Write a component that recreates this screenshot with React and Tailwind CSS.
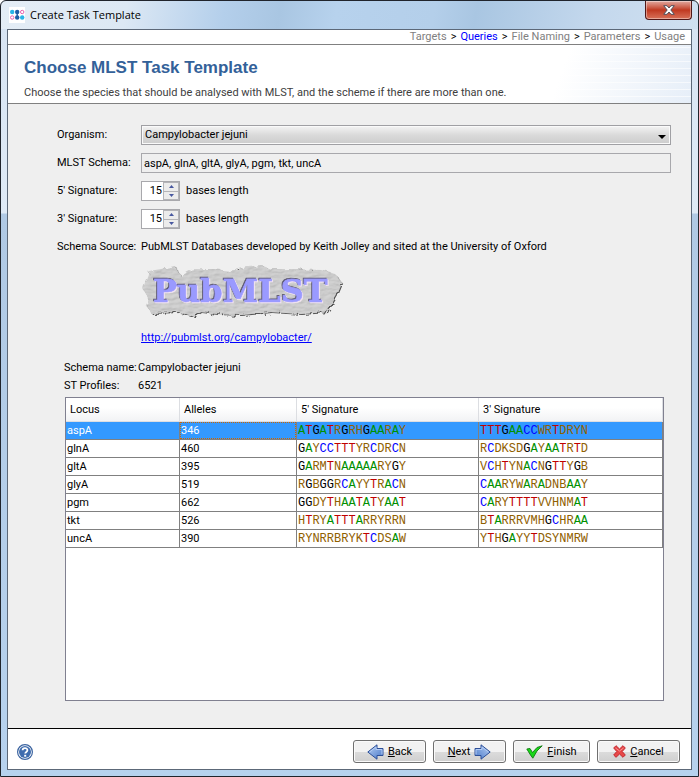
const steps = ['Targets', 'Queries', 'File Naming', 'Parameters', 'Usage'];

const loci = [
  { locus: 'aspA', alleles: 346, five: 'ATGATRGRHGAARAY', three: 'TTTGAACCWRTDRYN' },
  { locus: 'glnA', alleles: 460, five: 'GAYCCTTTYRCDRCN', three: 'RCDKSDGAYAATRTD' },
  { locus: 'gltA', alleles: 395, five: 'GARMTNAAAAARYGY', three: 'VCHTYNACNGTTYGB' },
  { locus: 'glyA', alleles: 519, five: 'RGBGGRCAYYTRACN', three: 'CAARYWARADNBAAY' },
  { locus: 'pgm', alleles: 662, five: 'GGDYTHAATATYAAT', three: 'CARYTTTTVVHNMAT' },
  { locus: 'tkt', alleles: 526, five: 'HTRYATTTARRYRRN', three: 'BTARRRVMHGCHRAA' },
  { locus: 'uncA', alleles: 390, five: 'RYNRRBRYKTCDSAW', three: 'YTHGAYYTDSYNMRW' },
];

const baseColors = {
  A: 'text-[#009000]',
  C: 'text-[#0000ff]',
  G: 'text-black',
  T: 'text-[#c00000]',
};

function Sequence({ value }) {
  return (
    <span className="font-['Liberation_Mono',monospace] text-[12px]">
      {value.split('').map((base, i) => (
        <span key={i} className={baseColors[base] || 'text-[#906000]'}>{base}</span>
      ))}
    </span>
  );
}

function AppIcon() {
  return (
    <svg width="16" height="16" viewBox="0 0 16 16" className="bg-white">
      <circle cx="3.2" cy="5" r="2.2" fill="#28b4e8" />
      <circle cx="8.2" cy="5" r="2.2" fill="#1d5fa8" />
      <circle cx="13.2" cy="5" r="1.7" fill="none" stroke="#e860b0" />
      <circle cx="3.2" cy="10.5" r="1.7" fill="none" stroke="#e860b0" />
      <circle cx="8.2" cy="10.5" r="2.2" fill="#1d5fa8" />
      <circle cx="13.2" cy="10.5" r="2.2" fill="#28b4e8" />
      <path d="M8.2 4V12" stroke="#1d5fa8" strokeWidth="1.4" />
    </svg>
  );
}

function Spinner({ id }) {
  return (
    <div className="flex h-5 w-[39px] border border-[#a8a8ac] bg-white">
      <input
        id={id}
        type="text"
        defaultValue="15"
        className="w-[21px] bg-white pr-px text-right outline-none"
      />
      <div className="flex w-4 flex-col gap-px bg-[#b4b4b8] p-px">
        <button type="button" aria-label="Increase" className="flex flex-1 items-center justify-center bg-[#ececec]">
          <svg width="5" height="3" viewBox="0 0 5 3"><path d="M0 3 2.5 0 5 3z" fill="#4858a0" /></svg>
        </button>
        <button type="button" aria-label="Decrease" className="flex flex-1 items-center justify-center bg-[#ececec]">
          <svg width="5" height="3" viewBox="0 0 5 3"><path d="M0 0 2.5 3 5 0z" fill="#4858a0" /></svg>
        </button>
      </div>
    </div>
  );
}

function PubMlstLogo() {
  return (
    <svg width="204" height="56" viewBox="0 0 204 56" role="img" aria-label="PubMLST">
      <defs>
        <filter id="torn" x="-5%" y="-10%" width="110%" height="120%">
          <feTurbulence type="fractalNoise" baseFrequency="0.16" numOctaves="3" seed="4" result="n" />
          <feDisplacementMap in="SourceGraphic" in2="n" scale="6" result="shape" />
          <feTurbulence type="fractalNoise" baseFrequency="0.12 0.3" numOctaves="3" seed="9" result="grain" />
          <feDiffuseLighting in="grain" surfaceScale="0.8" lightingColor="#d6d6d6" result="lit">
            <feDistantLight azimuth="235" elevation="64" />
          </feDiffuseLighting>
          <feComposite in="lit" in2="shape" operator="in" result="stone" />
          <feDropShadow in="stone" dx="1" dy="1" stdDeviation="0.4" floodColor="#333" floodOpacity="0.8" />
        </filter>
        <filter id="carved" x="-5%" y="-10%" width="110%" height="120%">
          <feDropShadow in="SourceGraphic" dx="-1" dy="-1" stdDeviation="0.2" floodColor="#504c68" floodOpacity="0.9" result="dark" />
          <feDropShadow in="dark" dx="1" dy="1" stdDeviation="0.2" floodColor="#f6e6f6" floodOpacity="0.9" />
        </filter>
      </defs>
      <path
        d="M8 8 20 6 34 3 40 13 52 6 72 6 90 8 106 4 122 3 130 6 150 6 180 7 194 11 201 20 196 32 190 42 186 49 160 51 130 49 100 52 76 51 60 49 52 54 38 49 10 50 5 42 8 36 2 26 5 16z"
        fill="#c8c8c8"
        filter="url(#torn)"
      />
      <text
        x="12"
        y="39"
        fontFamily="'DejaVu Serif', serif"
        fontWeight="bold"
        fontSize="32"
        fill="#9a9aff"
        stroke="#9a9aff"
        strokeWidth="0.6"
        filter="url(#carved)"
      >
        PubMLST
      </text>
    </svg>
  );
}

function Arrow({ className = '' }) {
  return (
    <svg width="17" height="16" viewBox="0 0 17 16" className={className}>
      <defs>
        <linearGradient id="arrow" x1="0" y1="0" x2="1" y2="1">
          <stop offset="0" stopColor="#b8d0f4" />
          <stop offset="1" stopColor="#4878c8" />
        </linearGradient>
      </defs>
      <path d="M0.8 8 10 0.8V4.5H16V11.5H10V15.2z" fill="url(#arrow)" stroke="#2c4f98" />
      <path d="M2.6 8 9 3V5.5H15V10.5" fill="none" stroke="#b4ccf4" />
    </svg>
  );
}

function CheckIcon() {
  return (
    <svg width="17" height="14" viewBox="0 0 17 14">
      <path d="M0.8 4 4 3.5 6.5 7.5 11 2.5 16.2 0.8 11 6 6.8 13.2 4.5 10z" fill="#18d818" stroke="#107810" strokeWidth="0.9" />
    </svg>
  );
}

function CrossIcon() {
  return (
    <svg width="13" height="13" viewBox="0 0 13 13">
      <path
        d="M3 0.7 6.5 4 10 0.7 12.3 3 9.2 6.5 12.3 10 10 12.3 6.5 9 3 12.3 0.7 10 3.8 6.5 0.7 3z"
        fill="#e84848"
        stroke="#c02830"
        strokeLinejoin="round"
      />
      <path d="M2.5 3 6.5 6 10.5 3" fill="none" stroke="#f89090" />
    </svg>
  );
}

function HelpIcon() {
  return (
    <svg width="16" height="16" viewBox="0 0 16 16">
      <circle cx="8" cy="8" r="7.4" fill="#fff" stroke="#3c64a0" strokeWidth="1.2" />
      <circle cx="8" cy="8" r="6" fill="#3f6cae" />
      <path d="M5.6 6.3C5.6 3.4 10.4 3.4 10.4 6.2 10.4 8 8.2 7.8 8.2 9.6" fill="none" stroke="#fff" strokeWidth="1.8" />
      <rect x="7.2" y="10.8" width="2" height="1.9" fill="#fff" />
    </svg>
  );
}

const navButton =
  'flex h-[23px] items-center justify-center gap-1 rounded-[3px] border border-[#707070] bg-linear-to-b from-[#f2f2f2] from-50% via-[#dcdcdc] via-50% to-[#cfcfcf] shadow-[inset_0_0_0_1px_#fafafa]';

const headCell = 'border-r border-b border-[#dcdee2] pl-1 font-normal';
const cell = 'border-r border-b border-[#808080] p-0';

export default function App() {
  return (
    <div className="flex min-h-screen flex-col rounded-t-md border border-[#20242c] bg-[linear-gradient(100deg,#e4edf6_0%,#dce8f4_18%,#b4cfeb_32%,#a9c6e2_40%,#b7d2ed_48%,#b4cfea_62%,#a9c6e2_68%,#c4d8ed_85%,#d0e0f0_100%),linear-gradient(#d6e3f2_0px,#dfeaf6_212px,#b0c9e4_213px,#b7d2ee_100%)] bg-[length:100%_28px,100%_100%] bg-no-repeat px-1.5 pb-1.5 font-['Roboto',sans-serif] text-[11px] leading-[14px] text-black">
      {/* Title bar */}
      <div className="flex h-7 items-start justify-between">
        <div className="flex h-7 items-center gap-[5px] pl-0.5 font-['Open_Sans',sans-serif]">
          <AppIcon />
          <span>Create Task Template</span>
        </div>
        <button
          type="button"
          aria-label="Close"
          className="flex h-[19px] w-[47px] items-center justify-center rounded-b-[4px] border border-t-0 border-[#501818] bg-linear-to-b from-[#e0a8a0] from-0% via-[#c03820] via-50% to-[#d87058] shadow-[inset_0_0_0_1px_#ffffff66]"
        >
          <svg width="12" height="10" viewBox="0 0 12 10">
            <path d="M0.7 0.7H4L6 3 8 0.7H11.3L7.8 5 11.3 9.3H8L6 7 4 9.3H0.7L4.2 5z" fill="#fff" stroke="#50505c" />
          </svg>
        </button>
      </div>

      <div className="flex flex-1 flex-col border border-[#5c6878] bg-[#efefef]">
        {/* Wizard steps */}
        <nav className="flex h-[15px] items-center justify-end gap-1 border-b border-[#808080] bg-white pr-1.5 text-[#808080]">
          {steps.map((step, i) => (
            <span key={step} className="flex gap-1">
              {i > 0 && <span className="text-black">&gt;</span>}
              <span className={step === 'Queries' ? 'text-[#0000ff]' : ''}>{step}</span>
            </span>
          ))}
        </nav>

        {/* Heading */}
        <header className="flex h-[59px] flex-col justify-between border-b border-[#808080] bg-[repeating-linear-gradient(to_bottom,transparent_0_2px,#ffffff99_2px_3px,transparent_3px_7px),linear-gradient(110deg,#fff_80%,#e6eef8_100%)] pt-[11px] pr-4 pb-[3px] pl-4">
          <h1 className="font-['Liberation_Sans',sans-serif] text-[17px] leading-6 font-bold text-[#336199]">
            Choose MLST Task Template
          </h1>
          <p className="text-[#404040]">
            Choose the species that should be analysed with MLST, and the scheme if there are more than one.
          </p>
        </header>

        {/* Form */}
        <main className="flex flex-1 flex-col pt-[21px] pr-5 pb-[27px] pl-[49px]">
          <div className="grid grid-cols-[84px_1fr] gap-y-2">
            <label htmlFor="organism" className="self-center">Organism:</label>
            <div className="relative">
              <select
                id="organism"
                className="block h-5 w-full appearance-none border border-[#a0a0a4] bg-linear-to-b from-[#f4f4f4] from-0% via-[#dadada] via-50% to-[#cccccc] pl-[3px] shadow-[inset_0_0_0_1px_#fafafa] outline-none"
              >
                <option>Campylobacter jejuni</option>
              </select>
              <svg width="8" height="4" viewBox="0 0 8 4" className="pointer-events-none absolute top-[10px] right-[5px]">
                <path d="M0 0H8L4 4z" />
              </svg>
            </div>

            <label htmlFor="schema" className="self-center">MLST Schema:</label>
            <input
              id="schema"
              type="text"
              readOnly
              value="aspA, glnA, gltA, glyA, pgm, tkt, uncA"
              className="h-5 border border-[#a8a8ac] bg-[#efefef] pl-0.5 outline-none"
            />

            <label htmlFor="five" className="self-center">5' Signature:</label>
            <div className="flex items-center gap-1.5">
              <Spinner id="five" />
              <span>bases length</span>
            </div>

            <label htmlFor="three" className="self-center">3' Signature:</label>
            <div className="flex items-center gap-1.5">
              <Spinner id="three" />
              <span>bases length</span>
            </div>

            <span className="leading-5">Schema Source:</span>
            <div>
              <p className="leading-5">PubMLST Databases developed by Keith Jolley and sited at the University of Oxford</p>
              <div className="mt-1.5"><PubMlstLogo /></div>
              <a href="http://pubmlst.org/campylobacter/" className="mt-3 block text-[#0000ff] underline">
                http://pubmlst.org/campylobacter/
              </a>
            </div>
          </div>

          <dl className="mt-3.5 grid grid-cols-[74px_1fr] pl-[7px] leading-[18px] whitespace-nowrap">
            <dt>Schema name:</dt>
            <dd>Campylobacter jejuni</dd>
            <dt>ST Profiles:</dt>
            <dd>6521</dd>
          </dl>

          <div className="mt-0.5 mr-[7px] ml-2 flex-1 border border-[#808090] bg-white">
            <table className="w-full table-fixed border-separate border-spacing-0">
              <colgroup>
                <col className="w-[114px]" />
                <col className="w-[117px]" />
                <col className="w-[182px]" />
                <col />
              </colgroup>
              <thead>
                <tr className="h-6 bg-linear-to-b from-white from-40% to-[#f1f2f4] text-left">
                  <th className={headCell}>Locus</th>
                  <th className={headCell}>Alleles</th>
                  <th className={headCell}>5' Signature</th>
                  <th className={headCell}>3' Signature</th>
                </tr>
              </thead>
              <tbody>
                {loci.map((row, i) => (
                  <tr key={row.locus} className={i === 0 ? 'h-[18px] bg-[#3399ff] text-white' : 'h-[18px]'}>
                    <td className={cell}><div className="pl-px">{row.locus}</div></td>
                    <td className={cell}>
                      <div className={i === 0 ? 'border border-dotted border-[#cc6600] leading-[15px]' : 'pl-px'}>
                        {row.alleles}
                      </div>
                    </td>
                    <td className={cell}><div className="pl-px"><Sequence value={row.five} /></div></td>
                    <td className={cell}><div className="pl-px"><Sequence value={row.three} /></div></td>
                  </tr>
                ))}
              </tbody>
            </table>
          </div>
        </main>

        {/* Footer */}
        <footer className="flex items-center justify-between border-t border-black bg-white pt-[11px] pr-[11px] pb-[6px] pl-[9px]">
          <button type="button" aria-label="Help"><HelpIcon /></button>
          <div className="flex gap-[7px]">
            <button type="button" className={`${navButton} w-[73px]`}>
              <Arrow />
              <span><u>B</u>ack</span>
            </button>
            <button type="button" className={`${navButton} w-[73px]`}>
              <span><u>N</u>ext</span>
              <Arrow className="-scale-x-100" />
            </button>
            <button type="button" className={`${navButton} w-[77px]`}>
              <CheckIcon />
              <span><u>F</u>inish</span>
            </button>
            <button type="button" className={`${navButton} w-[83px]`}>
              <CrossIcon />
              <span><u>C</u>ancel</span>
            </button>
          </div>
        </footer>
      </div>
    </div>
  );
}
